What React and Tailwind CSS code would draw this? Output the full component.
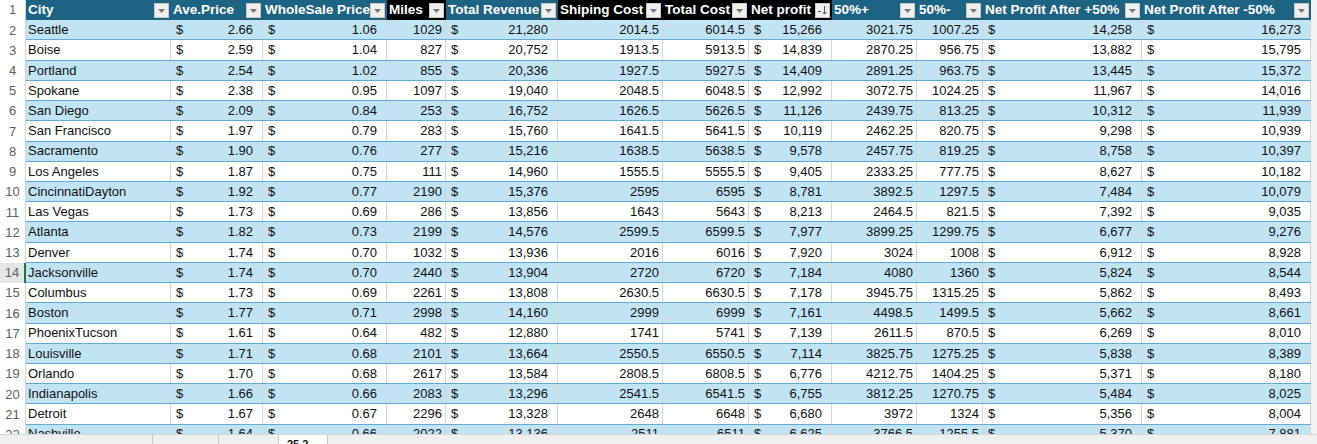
import React from "react";

const cols = [
  { name: "City", w: "w-[145px]", kind: "text" },
  { name: "Ave.Price", w: "w-[92px]", kind: "acct" },
  { name: "WholeSale Price", w: "w-[124px]", kind: "acct" },
  { name: "Miles", w: "w-[59px]", kind: "num", dark: true },
  { name: "Total Revenue", w: "w-[112px]", kind: "acct" },
  { name: "Shiping Cost", w: "w-[105px]", kind: "num", dark: true },
  { name: "Total Cost", w: "w-[86px]", kind: "num", dark: true },
  { name: "Net profit", w: "w-[83px]", kind: "acct", dark: true, sorted: true },
  { name: "50%+", w: "w-[85px]", kind: "num" },
  { name: "50%-", w: "w-[66px]", kind: "num" },
  { name: "Net Profit After +50%", w: "w-[159px]", kind: "acct" },
  { name: "Net Profit After -50%", w: "w-[169px]", kind: "acct" },
];

const rows = [
  ["Seattle", "2.66", "1.06", "1029", "21,280", "2014.5", "6014.5", "15,266", "3021.75", "1007.25", "14,258", "16,273"],
  ["Boise", "2.59", "1.04", "827", "20,752", "1913.5", "5913.5", "14,839", "2870.25", "956.75", "13,882", "15,795"],
  ["Portland", "2.54", "1.02", "855", "20,336", "1927.5", "5927.5", "14,409", "2891.25", "963.75", "13,445", "15,372"],
  ["Spokane", "2.38", "0.95", "1097", "19,040", "2048.5", "6048.5", "12,992", "3072.75", "1024.25", "11,967", "14,016"],
  ["San Diego", "2.09", "0.84", "253", "16,752", "1626.5", "5626.5", "11,126", "2439.75", "813.25", "10,312", "11,939"],
  ["San Francisco", "1.97", "0.79", "283", "15,760", "1641.5", "5641.5", "10,119", "2462.25", "820.75", "9,298", "10,939"],
  ["Sacramento", "1.90", "0.76", "277", "15,216", "1638.5", "5638.5", "9,578", "2457.75", "819.25", "8,758", "10,397"],
  ["Los Angeles", "1.87", "0.75", "111", "14,960", "1555.5", "5555.5", "9,405", "2333.25", "777.75", "8,627", "10,182"],
  ["CincinnatiDayton", "1.92", "0.77", "2190", "15,376", "2595", "6595", "8,781", "3892.5", "1297.5", "7,484", "10,079"],
  ["Las Vegas", "1.73", "0.69", "286", "13,856", "1643", "5643", "8,213", "2464.5", "821.5", "7,392", "9,035"],
  ["Atlanta", "1.82", "0.73", "2199", "14,576", "2599.5", "6599.5", "7,977", "3899.25", "1299.75", "6,677", "9,276"],
  ["Denver", "1.74", "0.70", "1032", "13,936", "2016", "6016", "7,920", "3024", "1008", "6,912", "8,928"],
  ["Jacksonville", "1.74", "0.70", "2440", "13,904", "2720", "6720", "7,184", "4080", "1360", "5,824", "8,544"],
  ["Columbus", "1.73", "0.69", "2261", "13,808", "2630.5", "6630.5", "7,178", "3945.75", "1315.25", "5,862", "8,493"],
  ["Boston", "1.77", "0.71", "2998", "14,160", "2999", "6999", "7,161", "4498.5", "1499.5", "5,662", "8,661"],
  ["PhoenixTucson", "1.61", "0.64", "482", "12,880", "1741", "5741", "7,139", "2611.5", "870.5", "6,269", "8,010"],
  ["Louisville", "1.71", "0.68", "2101", "13,664", "2550.5", "6550.5", "7,114", "3825.75", "1275.25", "5,838", "8,389"],
  ["Orlando", "1.70", "0.68", "2617", "13,584", "2808.5", "6808.5", "6,776", "4212.75", "1404.25", "5,371", "8,180"],
  ["Indianapolis", "1.66", "0.66", "2083", "13,296", "2541.5", "6541.5", "6,755", "3812.25", "1270.75", "5,484", "8,025"],
  ["Detroit", "1.67", "0.67", "2296", "13,328", "2648", "6648", "6,680", "3972", "1324", "5,356", "8,004"],
  ["Nashville", "1.64", "0.66", "2022", "13,136", "2511", "6511", "6,625", "3766.5", "1255.5", "5,370", "7,881"],
];

const FilterBtn = ({ sorted }) => (
  <span className="absolute right-[2px] top-[3px] w-[15px] h-[15px] bg-[#efefef] border border-[#c8c8c8] flex items-center justify-center">
    {sorted ? (
      <svg width="11" height="11" viewBox="0 0 11 11">
        <path d="M1 6.5h3" stroke="#555" strokeWidth="1" />
        <path d="M7.5 1v8M5.5 7l2 2.2 2-2.2" stroke="#555" strokeWidth="1" fill="none" />
      </svg>
    ) : (
      <svg width="9" height="6" viewBox="0 0 9 6">
        <path d="M1 1h7L4.5 5z" fill="#777" />
      </svg>
    )}
  </span>
);

const Cell = ({ col, value }) => {
  if (col.kind === "text") {
    return (
      <div className={`${col.w} shrink-0 h-full border-r border-[#d6d6d6] pl-[2px] flex items-center`}>
        {value}
      </div>
    );
  }
  if (col.kind === "acct") {
    return (
      <div className={`${col.w} shrink-0 h-full border-r border-[#d6d6d6] pl-[5px] pr-[9px] flex items-center justify-between`}>
        <span>$</span>
        <span>{value}</span>
      </div>
    );
  }
  return (
    <div className={`${col.w} shrink-0 h-full border-r border-[#d6d6d6] pr-[3px] flex items-center justify-end`}>
      {value}
    </div>
  );
};

export default function App() {
  return (
    <div className="w-[1317px] h-[444px] overflow-hidden bg-white flex flex-col text-[13px] text-[#111]" style={{ fontFamily: '"Liberation Sans", Arial, sans-serif' }}>
      <div className="h-[434px] overflow-hidden flex">
        <div className="flex flex-col">
          {/* header row */}
          <div className="flex h-[21px]">
            <div className="w-[26px] shrink-0 h-full bg-white border-r border-[#d4d4d4] flex items-center justify-center text-[#5f5f5f]">1</div>
            {cols.map((c) => (
              <div
                key={c.name}
                className={`${c.w} shrink-0 h-full relative flex items-center pl-[2px] font-bold text-white text-[13.5px] whitespace-nowrap overflow-hidden ${c.dark ? "bg-black" : "bg-[#1d6383]"}`}
              >
                {c.name}
                <FilterBtn sorted={c.sorted} />
              </div>
            ))}
          </div>
          {rows.map((r, i) => {
            const n = i + 2;
            const band = n % 2 === 0;
            return (
              <div key={n} className="flex h-[20.22px] shrink-0">
                <div className={`w-[26px] shrink-0 h-full flex items-center justify-center text-[#5f5f5f] ${n === 14 ? "bg-[#e6e6e6] border-r-2 border-[#217346]" : "bg-white border-r border-[#d4d4d4]"}`}>
                  {n}
                </div>
                <div className={`flex h-full border-b border-[#64acd6] ${band ? "bg-[#c1e4f5]" : "bg-white"}`}>
                  {cols.map((c, j) => (
                    <Cell key={j} col={c} value={r[j]} />
                  ))}
                </div>
              </div>
            );
          })}
        </div>
        <div className="flex-1 bg-[#f3f3f3]"></div>
      </div>
      <div className="h-[10px] bg-[#f0f0f0] border-t border-[#d8d8d8] flex">
        <div className="w-[152px]"></div>
        <div className="w-[66px] border-l border-[#c8c8c8]"></div>
        <div className="w-[60px] border-l border-[#c8c8c8]"></div>
        <div className="w-[50px] bg-white border-x border-[#c8c8c8] text-[11px] font-bold leading-[18px] pl-[8px]">25.2</div>
      </div>
    </div>
  );
}
